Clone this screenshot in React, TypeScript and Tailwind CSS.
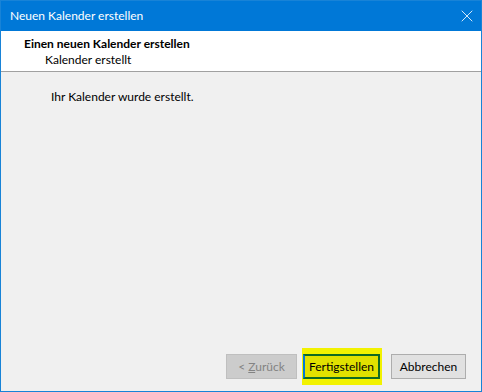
import { X } from 'lucide-react';

const FONT = { fontFamily: 'Lato, "Segoe UI", "Liberation Sans", sans-serif' };

export default function App() {
  return (
    <div
      style={FONT}
      className="w-[482px] h-[392px] flex flex-col border border-[#1883d7] bg-[#f0f0f0] text-[12px] text-black"
    >
      {/* title bar */}
      <div className="h-[30px] shrink-0 flex items-center justify-between bg-[#0078d7] text-white pl-[9px] pr-[4px]">
        <span>Neuen Kalender erstellen</span>
        <X size={20} strokeWidth={1} />
      </div>

      {/* wizard header */}
      <div className="h-[41px] shrink-0 bg-white border-b border-[#a0a0a0] pl-[23px] pt-[5px] leading-[16px]">
        <div className="font-bold">Einen neuen Kalender erstellen</div>
        <div className="pl-[21px]">Kalender erstellt</div>
      </div>

      {/* body */}
      <div className="flex-1 flex flex-col">
        <div className="pl-[50px] pt-[16px]">Ihr Kalender wurde erstellt.</div>

        <div className="mt-auto flex items-center justify-end pb-[12px] pr-[15px]">
          <button className="w-[71px] h-[25px] border border-[#bfbfbf] bg-[#cccccc] text-[#838383]">
            &lt; <span className="underline">Z</span>urück
          </button>
          <div className="ml-[5px] bg-[#f2f200] py-[6px] pl-[1px] pr-[2px] -my-[6px]">
            <button className="w-[77px] h-[25px] border-2 border-[#0f6a22] border-l-[#0078d7] bg-[#e1e100]">
              Fertigstellen
            </button>
          </div>
          <button className="ml-[9px] w-[75px] h-[25px] border border-[#adadad] bg-[#e1e1e1]">
            Abbrechen
          </button>
        </div>
      </div>
    </div>
  );
}
